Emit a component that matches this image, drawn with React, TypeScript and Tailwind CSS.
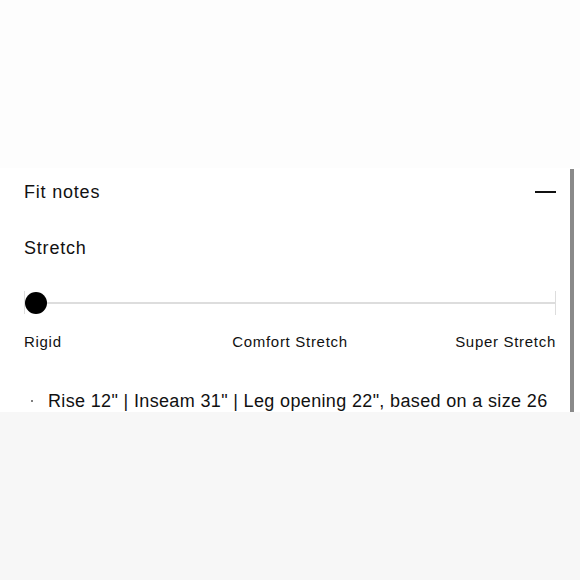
export default function App() {
  return (
    <div
      className="flex h-[580px] w-[580px] flex-col bg-[#fdfdfd] text-[#111]"
      style={{ fontFamily: '"Liberation Sans", Arial, sans-serif' }}
    >
      <div className="h-[168px] bg-[#fdfdfd]" />

      <div className="flex h-[244px] bg-white">
        <div className="flex-1 pl-6 pr-[14px]">
          <div className="flex h-[48px] items-center justify-between">
            <h2 className="text-[18px] leading-[28px] tracking-[0.8px]">Fit notes</h2>
            <span className="block h-[2px] w-[21px] bg-[#111]" />
          </div>

          <p className="mt-[18px] text-[18px] leading-[28px] tracking-[0.8px]">Stretch</p>

          <div className="relative mt-[29px] h-[24px]">
            <div className="absolute left-0 top-0 h-[23px] w-px bg-[#ddd]" />
            <div className="absolute left-0 right-0 top-[11px] h-[1.5px] bg-[#ddd]" />
            <div className="absolute right-0 top-0 h-[24px] w-px bg-[#ddd]" />
            <div className="absolute left-[1px] top-[1px] h-[22px] w-[22px] rounded-full bg-black" />
          </div>

          <div className="mt-[17px] grid grid-cols-3 text-[15px] leading-[20px] tracking-[0.7px]">
            <span>Rigid</span>
            <span className="whitespace-nowrap text-center">Comfort Stretch</span>
            <span className="text-right">Super Stretch</span>
          </div>

          <ul className="mt-[35px]">
            <li className="flex items-center text-[18px] leading-[28px] tracking-[0.35px]">
              <span className="flex w-[24px] pl-[7px]">
                <span className="block h-[2px] w-[2px] rounded-full bg-[#555]" />
              </span>
              <span>Rise 12" | Inseam 31" | Leg opening 22", based on a size 26</span>
            </li>
          </ul>
        </div>
        <div className="mt-px w-[4px] bg-[#8a8a8a]" />
        <div className="w-[6px]" />
      </div>

      <div className="flex-1 bg-[#f7f7f7]" />
    </div>
  );
}
